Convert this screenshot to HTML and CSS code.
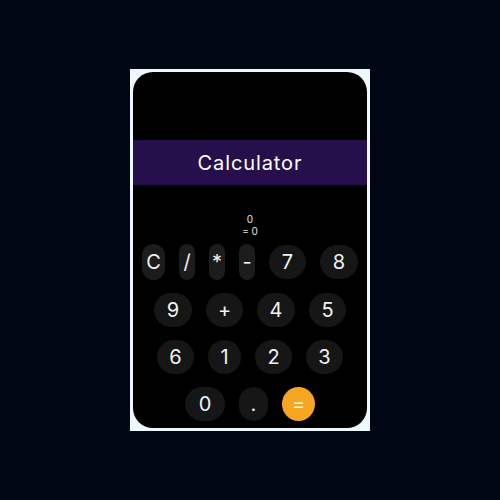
FILE: index.html
```html
<!DOCTYPE html>
<html lang="en">
<head>
<meta charset="utf-8">
<title>Calculator</title>
<link rel="stylesheet" href="styles.css">
</head>
<body>
<div class="frame">
  <div class="card">
    <div class="top-space"></div>
    <div class="header">Calculator</div>
    <div class="display">
      <div class="expr">0</div>
      <div class="result">= 0</div>
    </div>
    <div class="keys">
      <button class="key op op-c">C</button>
      <button class="key op">/</button>
      <button class="key op">*</button>
      <button class="key op">-</button>
      <button class="key num">7</button>
      <button class="key num wide">8</button>
      <button class="key num wide">9</button>
      <button class="key num">+</button>
      <button class="key num wide">4</button>
      <button class="key num">5</button>
      <button class="key num">6</button>
      <button class="key num slim">1</button>
      <button class="key num">2</button>
      <button class="key num">3</button>
      <button class="key num zero">0</button>
      <button class="key num dot">.</button>
      <button class="key num eq">=</button>
    </div>
  </div>
</div>
</body>
</html>
```

FILE: styles.css
```css
html, body {
  margin: 0;
  padding: 0;
}

body {
  width: 500px;
  height: 500px;
  background: #000814;
  display: flex;
  align-items: center;
  justify-content: center;
  font-family: "Inter", "Open Sans", sans-serif;
}

.frame {
  background: #f0f8ff;
  padding: 3px;
}

.card {
  width: 234px;
  height: 356px;
  background: #000;
  border-radius: 20px;
  display: flex;
  flex-direction: column;
  overflow: hidden;
}

.top-space {
  height: 68px;
}

.header {
  height: 45px;
  background: #26104c;
  color: #fff;
  font-size: 20px;
  display: flex;
  align-items: center;
  justify-content: center;
  letter-spacing: 0.9px;
}

.display {
  margin-top: 28px;
  text-align: center;
  color: #e6e6e6;
  font-size: 10px;
  line-height: 12px;
}

.keys {
  width: 222px;
  margin: 7px auto 0;
  display: flex;
  flex-wrap: wrap;
  justify-content: center;
  align-items: center;
  gap: 13px 14px;
}

.key {
  border: none;
  margin: 0;
  padding: 0;
  background: #161616;
  color: #f2f2f2;
  font-family: inherit;
  font-size: 20px;
  font-weight: 400;
  display: flex;
  align-items: center;
  justify-content: center;
  border-radius: 20px;
}

.op {
  width: 16px;
  height: 36px;
  background: #1c1c1c;
  font-size: 20px;
}

.op-c {
  width: 23px;
}

.num {
  width: 37px;
  height: 34px;
}

.wide {
  width: 38px;
}

.slim {
  width: 33px;
}

.zero {
  width: 40px;
}

.dot {
  width: 29px;
}

.eq {
  width: 33px;
  border-radius: 50%;
  background: #f5a623;
  color: #fff7e6;
}
```
